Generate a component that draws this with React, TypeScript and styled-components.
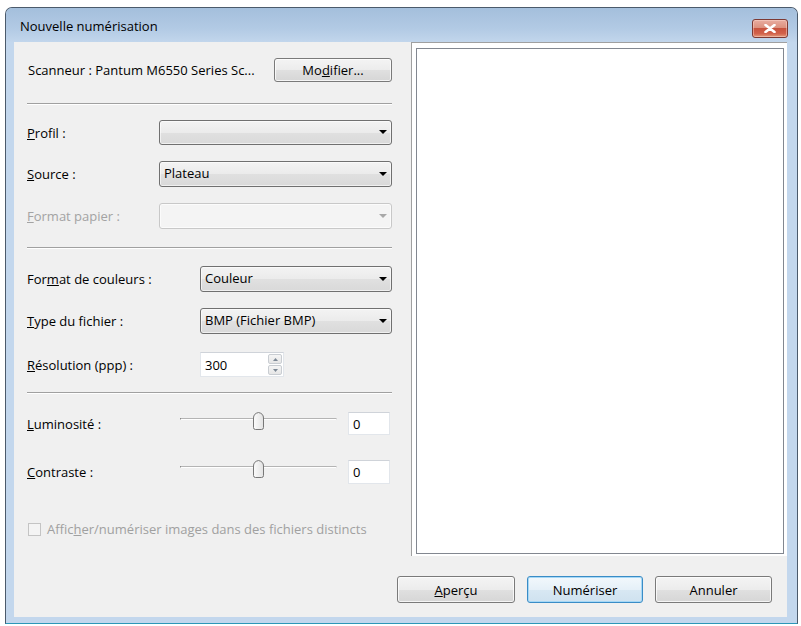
import React from "react";
import styled, { createGlobalStyle } from "styled-components";

const GlobalStyle = createGlobalStyle`
  html, body {
    margin: 0;
    padding: 0;
    background: #fff;
  }
  body {
    font-family: "Segoe UI", "Open Sans", "Noto Sans", sans-serif;
    font-size: 13px;
    color: #000;
  }
`;

const Page = styled.div`
  width: 801px;
  height: 626px;
  box-sizing: border-box;
  padding: 7px 3px 2px 5px;
`;

const Window = styled.div`
  width: 793px;
  height: 617px;
  box-sizing: border-box;
  border: 1px solid #4b5a6b;
  border-bottom-color: #2c97b8;
  border-radius: 7px 7px 0 0;
  background: #c3d7ed;
  display: flex;
  flex-direction: column;
  overflow: hidden;
`;

const TitleBar = styled.div`
  height: 34px;
  flex: none;
  display: flex;
  justify-content: space-between;
  align-items: flex-start;
  padding: 0 9px 0 14px;
  background: linear-gradient(to bottom, #a4bfdc 0%, #b2cae4 60%, #c2d6ec 100%);
`;

const Title = styled.span`
  line-height: 36px;
  color: #000;
`;

const CloseButton = styled.button`
  margin-top: 11px;
  width: 36px;
  height: 19px;
  padding: 0;
  border: 1px solid #7d3a33;
  border-radius: 3px;
  background: linear-gradient(
    to bottom,
    #e9ada0 0%,
    #dc917f 45%,
    #c8533e 50%,
    #d2624b 80%,
    #e49b7c 100%
  );
  box-shadow: inset 0 0 0 1px rgba(255, 220, 210, 0.45);
  display: flex;
  align-items: center;
  justify-content: center;
`;

const Frame = styled.div`
  flex: 1;
  display: flex;
  padding: 0 10px 6px 8px;
  min-height: 0;
`;

const Client = styled.div`
  flex: 1;
  background: #f0f0f0;
  display: flex;
  flex-direction: column;
`;

const TopArea = styled.div`
  height: 514px;
  display: flex;
`;

const Form = styled.div`
  width: 397px;
  flex: none;
  box-sizing: border-box;
  padding: 16px 19px 0 13px;
  display: flex;
  flex-direction: column;
`;

const Preview = styled.div`
  flex: 1;
  box-sizing: border-box;
  background: #fff;
  border-left: 1px solid #a0a0a0;
  border-top: 1px solid #a0a0a0;
  padding: 5px 3px 2px 4px;
  display: flex;
`;

const PreviewBox = styled.div`
  flex: 1;
  border: 1px solid #828790;
  background: #fff;
`;

const Row = styled.div<{ $top: number; $h: number }>`
  display: flex;
  align-items: center;
  margin-top: ${(p) => p.$top}px;
  height: ${(p) => p.$h}px;
  flex: none;
`;

const SpacedRow = styled(Row)`
  justify-content: space-between;
  padding-left: 1px;
`;

const Label = styled.span<{ $w: number; $disabled?: boolean }>`
  width: ${(p) => p.$w}px;
  flex: none;
  color: ${(p) => (p.$disabled ? "#a3a3a3" : "#000")};
  white-space: nowrap;
`;

const Key = styled.u`
  text-decoration: underline;
  text-underline-offset: 1px;
`;

const Rule = styled.div<{ $top: number }>`
  margin-top: ${(p) => p.$top}px;
  height: 0;
  border-top: 1px solid #a0a0a0;
  border-bottom: 1px solid #fff;
  flex: none;
`;

const Button = styled.button<{ $default?: boolean; $w?: number }>`
  width: ${(p) => p.$w ?? 117}px;
  height: ${(p) => (p.$default !== undefined ? 27 : 24)}px;
  flex: none;
  padding: 0;
  font: inherit;
  color: #000;
  border-radius: 3px;
  border: 1px solid ${(p) => (p.$default ? "#3a8cc6" : "#7a7a7a")};
  background: ${(p) =>
    p.$default
      ? "linear-gradient(to bottom, #f2f8fc 0%, #e5f0f8 50%, #d8e8f3 51%, #cfe2ef 100%)"
      : "linear-gradient(to bottom, #f4f4f4 0%, #ececec 50%, #e0e0e0 51%, #d6d6d6 100%)"};
  box-shadow: inset 0 0 0 1px
    ${(p) => (p.$default ? "#a6d8f6" : "rgba(255,255,255,0.75)")};
`;

const Combo = styled.div<{ $disabled?: boolean }>`
  flex: 1;
  height: 100%;
  box-sizing: border-box;
  display: flex;
  align-items: center;
  justify-content: space-between;
  padding: 0 4px 1px 4px;
  border-radius: 3px;
  border: 1px solid ${(p) => (p.$disabled ? "#c8c8c8" : "#707070")};
  background: ${(p) =>
    p.$disabled
      ? "#f4f4f4"
      : "linear-gradient(to bottom, #f3f3f3 0%, #ebebeb 50%, #e0e0e0 51%, #d9d9d9 100%)"};
  box-shadow: inset 0 0 0 1px rgba(255, 255, 255, 0.6);
`;

const ComboText = styled.span`
  line-height: 1;
`;

const TextBox = styled.div<{ $w: number }>`
  width: ${(p) => p.$w}px;
  height: 100%;
  box-sizing: border-box;
  flex: none;
  display: flex;
  align-items: center;
  background: #fff;
  border: 1px solid #e2e6eb;
  border-top-color: #cfd3d9;
  padding-left: 4px;
`;

const SpinGroup = styled.div`
  margin-left: auto;
  width: 15px;
  height: 100%;
  display: flex;
  flex-direction: column;
  gap: 1px;
  padding: 1px 1px 1px 0;
  box-sizing: border-box;
`;

const SpinButton = styled.div`
  flex: 1;
  border: 1px solid #c9cdd2;
  border-radius: 2px;
  background: linear-gradient(to bottom, #f5f5f5, #e6e6e6);
  display: flex;
  align-items: center;
  justify-content: center;
`;

const SliderBox = styled.div`
  width: 157px;
  height: 18px;
  align-self: flex-start;
  position: relative;
  flex: none;
  margin-right: 11px;
`;

const Track = styled.div`
  position: absolute;
  left: 0;
  right: 0;
  top: 6px;
  height: 1px;
  background: #b4b4b4;
  border-bottom: 1px solid #fff;
  border-left: 1px solid #8a8a8a;
  border-right: 1px solid #d0d0d0;
`;

const Thumb = styled.svg`
  position: absolute;
  left: 72px;
  top: 0;
`;

const CheckRow = styled(Row)`
  gap: 6px;
  padding-left: 1px;
  color: #a0a0a0;
`;

const CheckBox = styled.span`
  width: 13px;
  height: 13px;
  box-sizing: border-box;
  border: 1px solid #c4c4c4;
  background: #f4f4f4;
  flex: none;
`;

const ButtonRow = styled.div`
  display: flex;
  justify-content: flex-end;
  gap: 12px;
  padding: 20px 15px 14px 0;
`;

const Arrow = ({ color = "#000" }: { color?: string }) => (
  <svg width="8" height="4" viewBox="0 0 8 4">
    <path d="M0 0 H8 L4 4 Z" fill={color} />
  </svg>
);

const SmallArrow = ({ up }: { up?: boolean }) => (
  <svg width="5" height="3" viewBox="0 0 5 3">
    <path d={up ? "M0 3 H5 L2.5 0 Z" : "M0 0 H5 L2.5 3 Z"} fill="#7c8895" />
  </svg>
);

const SliderThumb = () => (
  <Thumb width="13" height="18" viewBox="0 0 13 18">
    <defs>
      <linearGradient id="thumbFill" x1="0" y1="0" x2="1" y2="0">
        <stop offset="0" stopColor="#fbfbfb" />
        <stop offset="1" stopColor="#e2e2e2" />
      </linearGradient>
    </defs>
    <path
      d="M1.5 6 Q1.5 1.5 6.5 0.5 Q11.5 1.5 11.5 6 V15.5 Q11.5 17.5 9.5 17.5 H3.5 Q1.5 17.5 1.5 15.5 Z"
      fill="url(#thumbFill)"
      stroke="#777"
      strokeWidth="1"
    />
  </Thumb>
);

const Slider = () => (
  <SliderBox>
    <Track />
    <SliderThumb />
  </SliderBox>
);

const App: React.FC = () => {
  return (
    <Page>
      <GlobalStyle />
      <Window>
        <TitleBar>
          <Title>Nouvelle numérisation</Title>
          <CloseButton aria-label="Fermer">
            <svg width="12" height="9" viewBox="0 0 12 9">
              <path
                d="M1.5 1 L10.5 8 M10.5 1 L1.5 8"
                stroke="#fff"
                strokeWidth="2.6"
                strokeLinecap="round"
              />
            </svg>
          </CloseButton>
        </TitleBar>
        <Frame>
          <Client>
            <TopArea>
              <Form>
                <SpacedRow $top={0} $h={24}>
                  <span>Scanneur : Pantum M6550 Series Sc...</span>
                  <Button $w={118}>
                    Mo<Key>d</Key>ifier...
                  </Button>
                </SpacedRow>
                <Rule $top={21} />
                <Row $top={15} $h={25}>
                  <Label $w={132}>
                    <Key>P</Key>rofil :
                  </Label>
                  <Combo>
                    <ComboText />
                    <Arrow />
                  </Combo>
                </Row>
                <Row $top={16} $h={26}>
                  <Label $w={132}>
                    <Key>S</Key>ource :
                  </Label>
                  <Combo>
                    <ComboText>Plateau</ComboText>
                    <Arrow />
                  </Combo>
                </Row>
                <Row $top={16} $h={26}>
                  <Label $w={132} $disabled>
                    <Key>F</Key>ormat papier :
                  </Label>
                  <Combo $disabled>
                    <ComboText />
                    <Arrow color="#a8a8a8" />
                  </Combo>
                </Row>
                <Rule $top={18} />
                <Row $top={17} $h={26}>
                  <Label $w={173}>
                    For<Key>m</Key>at de couleurs :
                  </Label>
                  <Combo>
                    <ComboText>Couleur</ComboText>
                    <Arrow />
                  </Combo>
                </Row>
                <Row $top={16} $h={26}>
                  <Label $w={173}>
                    <Key>T</Key>ype du fichier :
                  </Label>
                  <Combo>
                    <ComboText>BMP (Fichier BMP)</ComboText>
                    <Arrow />
                  </Combo>
                </Row>
                <Row $top={18} $h={25}>
                  <Label $w={173}>
                    <Key>R</Key>ésolution (ppp) :
                  </Label>
                  <TextBox $w={84}>
                    300
                    <SpinGroup>
                      <SpinButton>
                        <SmallArrow up />
                      </SpinButton>
                      <SpinButton>
                        <SmallArrow />
                      </SpinButton>
                    </SpinGroup>
                  </TextBox>
                </Row>
                <Rule $top={15} />
                <Row $top={18} $h={23}>
                  <Label $w={153}>
                    <Key>L</Key>uminosité :
                  </Label>
                  <Slider />
                  <TextBox $w={42}>0</TextBox>
                </Row>
                <Row $top={25} $h={24}>
                  <Label $w={153}>
                    <Key>C</Key>ontraste :
                  </Label>
                  <Slider />
                  <TextBox $w={42}>0</TextBox>
                </Row>
                <CheckRow $top={38} $h={14}>
                  <CheckBox />
                  <span>
                    Affic<Key>h</Key>er/numériser images dans des fichiers
                    distincts
                  </span>
                </CheckRow>
              </Form>
              <Preview>
                <PreviewBox />
              </Preview>
            </TopArea>
            <ButtonRow>
              <Button $default={false} $w={118}>
                <Key>A</Key>perçu
              </Button>
              <Button $default $w={116}>
                Numériser
              </Button>
              <Button $default={false} $w={117}>
                Annuler
              </Button>
            </ButtonRow>
          </Client>
        </Frame>
      </Window>
    </Page>
  );
};

export default App;
